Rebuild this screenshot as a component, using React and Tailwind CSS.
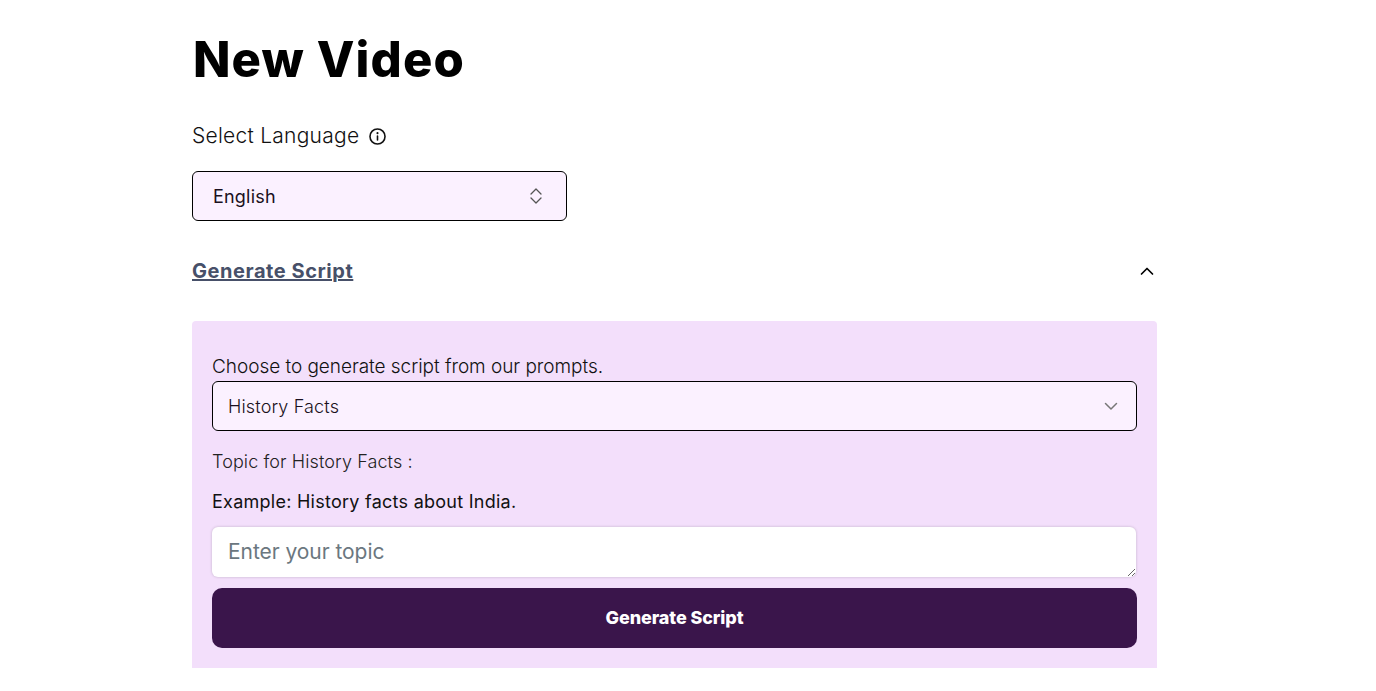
import React from "react";

function Info() {
  return (
    <svg width="19" height="19" viewBox="0 0 24 24" fill="none" stroke="#111" strokeWidth="2" strokeLinecap="round" strokeLinejoin="round">
      <circle cx="12" cy="12" r="9.5" />
      <path d="M12 11.5v5" />
      <path d="M12 7.6v.2" strokeWidth="2.6" />
    </svg>
  );
}

export default function App() {
  return (
    <div className="min-h-[691px] bg-white font-['Inter','Liberation_Sans',sans-serif] overflow-hidden">
      <div className="ml-[192px] w-[965px] h-[668px] flex flex-col">
        <h1 className="mt-[30px] h-[60px] text-[49px] leading-[60px] font-extrabold text-black tracking-[1.1px] pl-[1px]">New Video</h1>
        <div className="mt-[34px] h-[24px] flex items-center gap-[9px] text-[21px] leading-[24px] text-[#111] font-light tracking-[0.25px]">
          <span>Select Language</span>
          <Info />
        </div>
        <button className="mt-[23px] w-[375px] h-[50px] flex items-center justify-between pl-[20px] pr-[21px] rounded-[6px] border border-black bg-[#fbf1ff] text-[18px] text-[#1a1020] tracking-[0.2px]">
          <span>English</span>
          <svg width="18" height="20" viewBox="0 0 18 20" fill="none" stroke="#555" strokeWidth="1.3" strokeLinecap="round" strokeLinejoin="round">
            <path d="M4 8l5-5 5 5" />
            <path d="M4 12l5 5 5-5" />
          </svg>
        </button>
        <div className="mt-[38px] h-[24px] flex items-center justify-between pr-[2px]">
          <span className="text-[20px] leading-[24px] font-bold text-[#475069] underline tracking-[0.55px]">Generate Script</span>
          <svg width="16" height="16" viewBox="0 0 16 16" fill="none" stroke="#000" strokeWidth="1.7" strokeLinecap="round" strokeLinejoin="round">
            <path d="M2.5 11L8 5.5 13.5 11" />
          </svg>
        </div>
        <div className="mt-[38px] h-[347px] rounded-t-[4px] bg-[#f3dffb] px-[20px] pt-[33px] flex flex-col">
          <p className="h-[24px] pt-[1px] text-[19px] leading-[24px] font-light text-[#111] tracking-[-0.04px]">Choose to generate script from our prompts.</p>
          <div className="mt-[3px] h-[50px] flex items-center justify-between pl-[15px] pr-[17px] rounded-[6px] border border-black bg-[#fbf1ff] text-[18px] text-[#1a1020] font-light tracking-[0.15px]">
            <span>History Facts</span>
            <svg width="16" height="16" viewBox="0 0 16 16" fill="none" stroke="#777" strokeWidth="1.5" strokeLinecap="round" strokeLinejoin="round">
              <path d="M2.5 5.5L8 11l5.5-5.5" />
            </svg>
          </div>
          <p className="mt-[18px] h-[24px] pt-[1px] text-[18px] leading-[24px] font-light text-[#222] tracking-[0.1px]">Topic for History Facts :</p>
          <p className="mt-[16px] h-[24px] pt-[1px] text-[18px] leading-[24px] text-[#111] tracking-[0.26px]">Example: History facts about India.</p>
          <textarea
            rows={1}
            placeholder="Enter your topic"
            className="mt-[14px] block w-[924px] h-[50px] px-[16px] pt-[11px] pb-[11px] rounded-[6px] bg-white text-[21px] leading-[28px] shadow-[0_0_3px_rgba(0,0,0,0.2)] outline-none placeholder:text-[#6b7780] placeholder:opacity-100 tracking-[-0.05px]"
          />
          <button className="mt-[11px] h-[60px] rounded-[10px] bg-[#3a154b] text-white text-[18px] font-extrabold pb-[1px] tracking-[-0.1px]">Generate Script</button>
        </div>
      </div>
    </div>
  );
}
